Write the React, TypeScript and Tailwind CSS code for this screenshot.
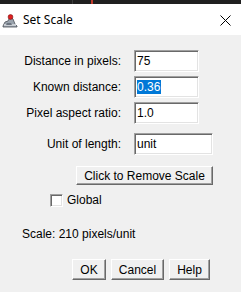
import React from 'react';

const fieldCls =
  'h-[22px] bg-white border border-t-[#a0a0a0] border-l-[#a0a0a0] border-b-white border-r-white shadow-[inset_1px_1px_0_#696969,inset_-1px_-1px_0_#e3e3e3] pl-[2px] text-[12px] leading-[20px] text-black';

const btnCls =
  'bg-[#f0f0f0] border border-t-white border-l-white border-b-[#696969] border-r-[#696969] shadow-[inset_-1px_-1px_0_#a0a0a0] text-[12px] text-black flex items-center justify-center';

function TitleIcon() {
  return (
    <svg width="16" height="15" viewBox="0 0 16 15">
      <path d="M1 13 L3 9 L6 8 L8 4 L11 6 L13 11 L15 13 L15 14 L1 14 Z" fill="#9aa3ad" stroke="#4a4f57" strokeWidth="0.8" />
      <rect x="2" y="11" width="12" height="2" fill="#c8cdd3" />
      <path d="M5 10 L9 10 L10 12 L4 12 Z" fill="#6d7580" />
      <circle cx="8.5" cy="4" r="2.4" fill="#e02020" stroke="#7a0c0c" strokeWidth="0.6" />
    </svg>
  );
}

function Row({ label, value, wide, selected }: { label: string; value: string; wide?: boolean; selected?: boolean }) {
  return (
    <div className="flex items-center">
      <div className="w-[122px] text-right text-[12px] text-black pr-[1px]">{label}</div>
      <div className={`${fieldCls} ml-[12px] ${wide ? 'w-[79px]' : 'w-[65px]'}`}>
        {selected ? <span className="bg-[#0078d7] text-white pr-[1px]">{value}</span> : value}
      </div>
    </div>
  );
}

export default function App() {
  return (
    <div className="w-[241px] h-[292px] bg-[#f0f0f0] flex flex-col overflow-hidden" style={{ fontFamily: '"Liberation Sans", Arial, sans-serif' }}>
      <div className="h-[4px] bg-[#1f1f1f] flex">
        <div className="w-[72px]" />
        <div className="w-[1px] bg-[#3c3c3c]" />
        <div className="w-[18px]" />
        <div className="w-[2px] bg-[#c0392b]" />
      </div>
      <div className="h-[31px] bg-white flex items-center">
        <div className="ml-[2px] mt-[2px]">
          <TitleIcon />
        </div>
        <span className="ml-[5px] text-[12px] text-black" style={{ fontFamily: '"Noto Sans", "Open Sans", sans-serif' }}>
          Set Scale
        </span>
        <svg className="ml-auto mr-[10px] mt-[2px]" width="11" height="11" viewBox="0 0 11 11">
          <path d="M0.5 0.5 L10.5 10.5 M10.5 0.5 L0.5 10.5" stroke="#000" strokeWidth="1" />
        </svg>
      </div>

      <div className="flex flex-col pt-[15px]">
        <div className="flex flex-col gap-[4px]">
          <Row label="Distance in pixels:" value="75" />
          <Row label="Known distance:" value="0.36" selected />
          <Row label="Pixel aspect ratio:" value="1.0" />
        </div>
        <div className="mt-[9px]">
          <Row label="Unit of length:" value="unit" wide />
        </div>
        <div className="mt-[11px] pl-[76px]">
          <button className={`${btnCls} w-[137px] h-[19px]`}>Click to Remove Scale</button>
        </div>
        <div className="mt-[9px] pl-[50px] flex items-center h-[13px]">
          <div className="w-[13px] h-[13px] bg-white border border-t-[#a0a0a0] border-l-[#a0a0a0] border-b-white border-r-white shadow-[inset_1px_1px_0_#696969,inset_-1px_-1px_0_#e3e3e3]" />
          <span className="ml-[4px] text-[12px] leading-[13px] text-black">Global</span>
        </div>
        <div className="mt-[20px] pl-[22px] text-[12px] text-black leading-[14px]">Scale: 210 pixels/unit</div>
        <div className="mt-[18px] pl-[72px] flex gap-[5px]">
          <button className={`${btnCls} w-[34px] h-[21px]`}>OK</button>
          <button className={`${btnCls} w-[53px] h-[21px]`}>Cancel</button>
          <button className={`${btnCls} w-[41px] h-[21px]`}>Help</button>
        </div>
      </div>
    </div>
  );
}
